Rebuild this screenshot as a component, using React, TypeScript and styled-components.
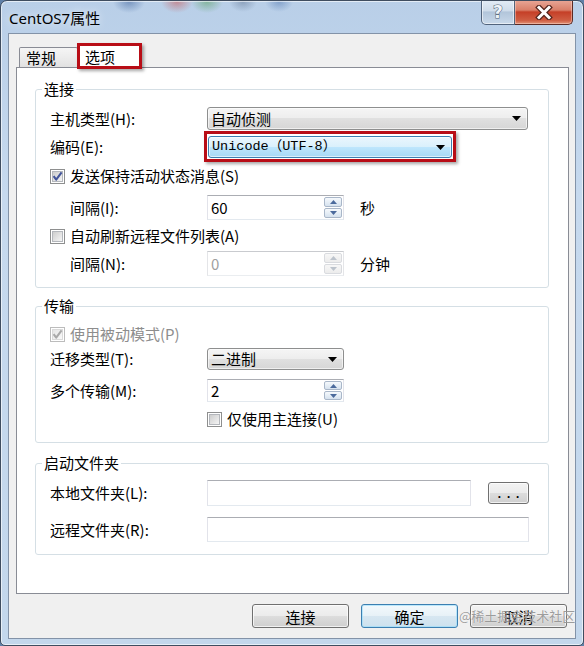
import styled, { createGlobalStyle, css } from "styled-components";

const FONT = `"Noto Sans CJK SC", "Noto Sans", sans-serif`;

const GlobalStyle = createGlobalStyle`
  html, body {
    margin: 0;
    padding: 0;
    background: #5f80a8;
  }
  *, *::before, *::after {
    box-sizing: border-box;
  }
`;

const Window = styled.div`
  position: relative;
  width: 584px;
  height: 646px;
  display: flex;
  flex-direction: column;
  overflow: hidden;
  border: 1px solid #3f4d60;
  border-radius: 7px 7px 5px 5px;
  background:
    radial-gradient(16px 11px at 128px 1px, rgba(70, 105, 160, 0.55), transparent),
    radial-gradient(16px 11px at 176px 1px, rgba(200, 90, 90, 0.55), transparent),
    radial-gradient(16px 11px at 206px 1px, rgba(90, 160, 100, 0.55), transparent),
    radial-gradient(14px 10px at 242px 1px, rgba(90, 110, 140, 0.45), transparent),
    radial-gradient(14px 10px at 278px 1px, rgba(70, 110, 170, 0.45), transparent),
    linear-gradient(180deg, #b9cfe8 0%, #c6d9ee 30%, #c3d7ec 100%);
  box-shadow: inset 0 0 0 1px rgba(255, 255, 255, 0.6);
  font-family: ${FONT};
  font-size: 15px;
  color: #000;
`;

const TitleBar = styled.div`
  flex: none;
  height: 32px;
  display: flex;
  justify-content: space-between;
  align-items: flex-start;
`;

const Title = styled.div`
  margin: 8px 0 0 8px;
  font-family: "Noto Sans", "Noto Sans CJK SC", sans-serif;
  font-size: 15px;
  line-height: 18px;
  text-shadow: 0 0 8px rgba(255, 255, 255, 0.9);
`;

const CaptionButtons = styled.div`
  display: flex;
  margin: -1px 10px 0 0;
`;

const HelpButton = styled.div`
  width: 34px;
  height: 25px;
  display: flex;
  align-items: center;
  justify-content: center;
  border: 1px solid #52647c;
  border-top: none;
  border-radius: 0 0 0 5px;
  background: linear-gradient(180deg, #e3ecf6 0%, #cfdcea 45%, #b2c5da 50%, #c9d9ea 100%);
  box-shadow: inset 0 0 0 1px rgba(255, 255, 255, 0.55);
`;

const HelpGlyph = styled.span`
  font-family: "DejaVu Sans", sans-serif;
  font-weight: bold;
  font-size: 17px;
  line-height: 1;
  color: #eef3f8;
  -webkit-text-stroke: 1px #4d5d72;
  paint-order: stroke fill;
`;

const CloseButton = styled.div`
  width: 58px;
  height: 25px;
  display: flex;
  align-items: center;
  justify-content: center;
  border: 1px solid #5b2a24;
  border-top: none;
  border-left: none;
  border-radius: 0 0 5px 0;
  background: linear-gradient(180deg, #e9a898 0%, #d97f69 42%, #c53f27 50%, #cf5e43 85%, #e29377 100%);
  box-shadow: inset 0 0 0 1px rgba(255, 220, 210, 0.45);
`;

const Client = styled.div`
  flex: 1;
  margin: 0 7px 6px 7px;
  border: 1px solid #8393a8;
  background: #f0f0f0;
  padding: 9px 6px 0 7px;
  display: flex;
  flex-direction: column;
`;

const TabStrip = styled.div`
  position: relative;
  z-index: 1;
  height: 25px;
  display: flex;
  align-items: flex-end;
  padding-left: 3px;
  margin-bottom: -1px;
`;

const Tab = styled.div<{ $active?: boolean }>`
  position: relative;
  display: flex;
  align-items: center;
  border: 1px solid #898c95;
  border-bottom: none;
  border-radius: 2px 2px 0 0;
  line-height: 18px;
  ${(p) =>
    p.$active
      ? css`
          width: 65px;
          height: 25px;
          margin-left: -1px;
          padding: 2px 0 0 7px;
          background: #fff;
          &::after {
            content: "";
            position: absolute;
            inset: -1px;
            border: 3px solid #b80d16;
            box-shadow: 2px 2px 3px rgba(0, 0, 0, 0.35);
          }
        `
      : css`
          width: 59px;
          height: 20px;
          margin-bottom: 1px;
          padding-left: 6px;
          background: linear-gradient(180deg, #f5f5f5 0%, #ececec 50%, #e1e1e1 100%);
        `}
`;

const Panel = styled.div`
  width: 553px;
  height: 527px;
  border: 1px solid #898c95;
  background: #fff;
  padding: 21px 0 0 18px;
  display: flex;
  flex-direction: column;
`;

const Group = styled.div<{ $mt: number; $pb: number }>`
  position: relative;
  width: 514px;
  margin-top: ${(p) => p.$mt}px;
  padding: 0 19px ${(p) => p.$pb}px 14px;
  border: 1px solid #d5dfe5;
  border-radius: 3px;
  display: flex;
  flex-direction: column;
`;

const Legend = styled.span`
  position: absolute;
  top: -10px;
  left: 6px;
  padding: 0 2px;
  background: #fff;
  line-height: 18px;
`;

const Row = styled.div<{ $h: number; $mt: number }>`
  display: flex;
  align-items: center;
  height: ${(p) => p.$h}px;
  margin-top: ${(p) => p.$mt}px;
  line-height: 18px;
  white-space: nowrap;
`;

const Label = styled.span<{ $indent?: boolean }>`
  flex: none;
  width: 157px;
  padding-left: ${(p) => (p.$indent ? 20 : 0)}px;
`;

const CheckText = styled.span<{ $disabled?: boolean }>`
  margin-left: 5px;
  color: ${(p) => (p.$disabled ? "#8d8d8d" : "#000")};
`;

const Unit = styled.span`
  margin-left: 16px;
`;

const Combo = styled.div<{ $w: number; $hot?: boolean; $mono?: boolean; $marked?: boolean }>`
  position: relative;
  width: ${(p) => p.$w}px;
  height: 100%;
  display: flex;
  align-items: center;
  justify-content: space-between;
  padding: 0 6px 0 3px;
  border: 1px solid ${(p) => (p.$hot ? "#3c7fb1" : "#8e8f8f")};
  border-radius: 3px;
  background: ${(p) =>
    p.$hot
      ? "linear-gradient(180deg, #eaf6fd 0%, #d9f0fc 50%, #bee6fd 50%, #a7d9f5 100%)"
      : "linear-gradient(180deg, #f5f5f5 0%, #ededed 50%, #e0e0e0 50%, #d6d6d6 100%)"};
  box-shadow: inset 0 0 0 1px rgba(255, 255, 255, 0.6);
  font-family: ${(p) => (p.$mono ? `"Liberation Mono", ${FONT}` : FONT)};
  font-size: ${(p) => (p.$mono ? 13.5 : 15)}px;
  ${(p) =>
    p.$marked &&
    css`
      margin-left: 1px;
      &::after {
        content: "";
        position: absolute;
        inset: -6px -5px -5px -5px;
        border: 3px solid #b80d16;
        box-shadow: 2px 2px 3px rgba(0, 0, 0, 0.35);
        pointer-events: none;
      }
    `}
`;

const fieldBorder = css<{ $disabled?: boolean }>`
  border: 1px solid;
  border-color: ${(p) =>
    p.$disabled ? "#c9cbcf #e4e5e8 #eaedf0 #e4e5e8" : "#abadb3 #e2e3ea #e3e9ef #e2e3ea"};
  background: #fff;
`;

const TextBox = styled.div<{ $w: number; $disabled?: boolean }>`
  ${fieldBorder};
  width: ${(p) => p.$w}px;
  height: 100%;
`;

const SpinBox = styled.div<{ $disabled?: boolean }>`
  ${fieldBorder};
  width: 137px;
  height: 100%;
  display: flex;
  padding: 1px;
  color: ${(p) => (p.$disabled ? "#a0a0a0" : "#000")};
`;

const SpinValue = styled.span`
  flex: 1;
  display: flex;
  align-items: center;
  padding-left: 2px;
`;

const SpinButtons = styled.div`
  width: 18px;
  display: flex;
  flex-direction: column;
  gap: 1px;
`;

const SpinBtn = styled.div<{ $disabled?: boolean }>`
  flex: 1;
  display: flex;
  align-items: center;
  justify-content: center;
  border: 1px solid ${(p) => (p.$disabled ? "#d9dbdf" : "#a9b7c9")};
  border-radius: 2px;
  background: ${(p) =>
    p.$disabled
      ? "linear-gradient(180deg, #f7f7f7, #ececec)"
      : "linear-gradient(180deg, #f6f9fc 0%, #e6eef6 50%, #d6e2ee 100%)"};
`;

const PushButton = styled.div<{ $default?: boolean; $w: number }>`
  width: ${(p) => p.$w}px;
  height: 100%;
  display: flex;
  align-items: center;
  justify-content: center;
  border: 1px solid ${(p) => (p.$default ? "#3c7fb1" : "#707070")};
  border-radius: 3px;
  background: ${(p) =>
    p.$default
      ? "linear-gradient(180deg, #f3f9fc 0%, #e7f1f7 50%, #d7e7f1 50%, #cde1ee 100%)"
      : "linear-gradient(180deg, #f3f3f3 0%, #ebebeb 50%, #dddddd 50%, #cfcfcf 100%)"};
  box-shadow: inset 0 0 0 1px ${(p) => (p.$default ? "rgba(150, 220, 250, 0.6)" : "rgba(255, 255, 255, 0.7)")};
`;

const BrowseSlot = styled.div`
  height: 22px;
  margin-left: 17px;
`;

const Dots = styled.span`
  font-family: "Liberation Mono", monospace;
  font-weight: bold;
  font-size: 12px;
  letter-spacing: 2px;
  margin: 4px 0 0 2px;
`;

const ButtonRow = styled.div`
  height: 24px;
  margin-top: 10px;
  padding-right: 2px;
  display: flex;
  justify-content: flex-end;
  gap: 12px;
`;

const Watermark = styled.span`
  position: absolute;
  left: 458px;
  top: 606px;
  font-size: 13px;
  line-height: 18px;
  color: rgba(125, 125, 125, 0.75);
  text-shadow: 0 0 1px rgba(255, 255, 255, 0.9);
  white-space: nowrap;
`;

const CheckBox = ({ checked, disabled }: { checked?: boolean; disabled?: boolean }) => (
  <svg width="15" height="15" viewBox="0 0 15 15" style={{ flex: "none" }}>
    <defs>
      <linearGradient id={disabled ? "cbgd" : "cbg"} x1="0" y1="0" x2="1" y2="1">
        <stop offset="0" stopColor={disabled ? "#e4e4e4" : "#cbcbcb"} />
        <stop offset="1" stopColor={disabled ? "#fafafa" : "#f7f7f7"} />
      </linearGradient>
    </defs>
    <rect x="0.5" y="0.5" width="14" height="14" fill="#fff" stroke={disabled ? "#bcbcbc" : "#8e8f8f"} />
    <rect
      x="2.5"
      y="2.5"
      width="10"
      height="10"
      fill={`url(#${disabled ? "cbgd" : "cbg"})`}
      stroke={disabled ? "#dadada" : "#b4b7bc"}
    />
    {checked && (
      <path
        d="M3.6 7.2 L6.2 10.6 L11.6 3.4"
        fill="none"
        stroke={disabled ? "#a9a9a9" : "#43559a"}
        strokeWidth="2.1"
        strokeLinejoin="round"
      />
    )}
  </svg>
);

const DropArrow = () => (
  <svg width="9" height="5" viewBox="0 0 9 5" style={{ flex: "none" }}>
    <path d="M0 0H9L4.5 5Z" fill="#000" />
  </svg>
);

const SpinArrow = ({ up, disabled }: { up?: boolean; disabled?: boolean }) => (
  <svg width="7" height="4" viewBox="0 0 7 4">
    <path d={up ? "M0 4H7L3.5 0Z" : "M0 0H7L3.5 4Z"} fill={disabled ? "#bcc3cc" : "#4b6a9c"} />
  </svg>
);

const CloseIcon = () => (
  <svg width="18" height="15" viewBox="0 0 18 15">
    <path d="M4 2.5 L14 12.5 M14 2.5 L4 12.5" stroke="#56271f" strokeWidth="5.4" strokeLinecap="square" />
    <path d="M4 2.5 L14 12.5 M14 2.5 L4 12.5" stroke="#fff" strokeWidth="3" strokeLinecap="square" />
  </svg>
);

const Spinner = ({ value, disabled }: { value: string; disabled?: boolean }) => (
  <SpinBox $disabled={disabled}>
    <SpinValue>{value}</SpinValue>
    <SpinButtons>
      <SpinBtn $disabled={disabled}>
        <SpinArrow up disabled={disabled} />
      </SpinBtn>
      <SpinBtn $disabled={disabled}>
        <SpinArrow disabled={disabled} />
      </SpinBtn>
    </SpinButtons>
  </SpinBox>
);

export default function App() {
  return (
    <>
      <GlobalStyle />
      <Window>
        <TitleBar>
          <Title>CentOS7属性</Title>
          <CaptionButtons>
            <HelpButton>
              <HelpGlyph>?</HelpGlyph>
            </HelpButton>
            <CloseButton>
              <CloseIcon />
            </CloseButton>
          </CaptionButtons>
        </TitleBar>
        <Client>
          <TabStrip>
            <Tab>常规</Tab>
            <Tab $active>选项</Tab>
          </TabStrip>
          <Panel>
            <Group $mt={0} $pb={11}>
              <Legend>连接</Legend>
              <Row $h={23} $mt={17}>
                <Label>主机类型(H):</Label>
                <Combo $w={321}>
                  自动侦测
                  <DropArrow />
                </Combo>
              </Row>
              <Row $h={22} $mt={6}>
                <Label>编码(E):</Label>
                <Combo $w={244} $hot $mono $marked>
                  Unicode（UTF-8）
                  <DropArrow />
                </Combo>
              </Row>
              <Row $h={20} $mt={8}>
                <CheckBox checked />
                <CheckText>发送保持活动状态消息(S)</CheckText>
              </Row>
              <Row $h={25} $mt={9}>
                <Label $indent>间隔(I):</Label>
                <Spinner value="60" />
                <Unit>秒</Unit>
              </Row>
              <Row $h={20} $mt={6}>
                <CheckBox />
                <CheckText>自动刷新远程文件列表(A)</CheckText>
              </Row>
              <Row $h={25} $mt={5}>
                <Label $indent>间隔(N):</Label>
                <Spinner value="0" disabled />
                <Unit>分钟</Unit>
              </Row>
            </Group>

            <Group $mt={18} $pb={13}>
              <Legend>传输</Legend>
              <Row $h={20} $mt={17}>
                <CheckBox checked disabled />
                <CheckText $disabled>使用被动模式(P)</CheckText>
              </Row>
              <Row $h={22} $mt={4}>
                <Label>迁移类型(T):</Label>
                <Combo $w={137}>
                  二进制
                  <DropArrow />
                </Combo>
              </Row>
              <Row $h={23} $mt={9}>
                <Label>多个传输(M):</Label>
                <Spinner value="2" />
              </Row>
              <Row $h={20} $mt={7}>
                <Label />
                <CheckBox />
                <CheckText>仅使用主连接(U)</CheckText>
              </Row>
            </Group>

            <Group $mt={20} $pb={12}>
              <Legend>启动文件夹</Legend>
              <Row $h={26} $mt={16}>
                <Label>本地文件夹(L):</Label>
                <TextBox $w={264} />
                <BrowseSlot>
                  <PushButton $w={41}>
                    <Dots>...</Dots>
                  </PushButton>
                </BrowseSlot>
              </Row>
              <Row $h={25} $mt={11}>
                <Label>远程文件夹(R):</Label>
                <TextBox $w={322} />
              </Row>
            </Group>
          </Panel>
          <ButtonRow>
            <PushButton $w={97}>连接</PushButton>
            <PushButton $w={97} $default>
              确定
            </PushButton>
            <PushButton $w={97}>取消</PushButton>
          </ButtonRow>
        </Client>
        <Watermark>@稀土掘金技术社区</Watermark>
      </Window>
    </>
  );
}
